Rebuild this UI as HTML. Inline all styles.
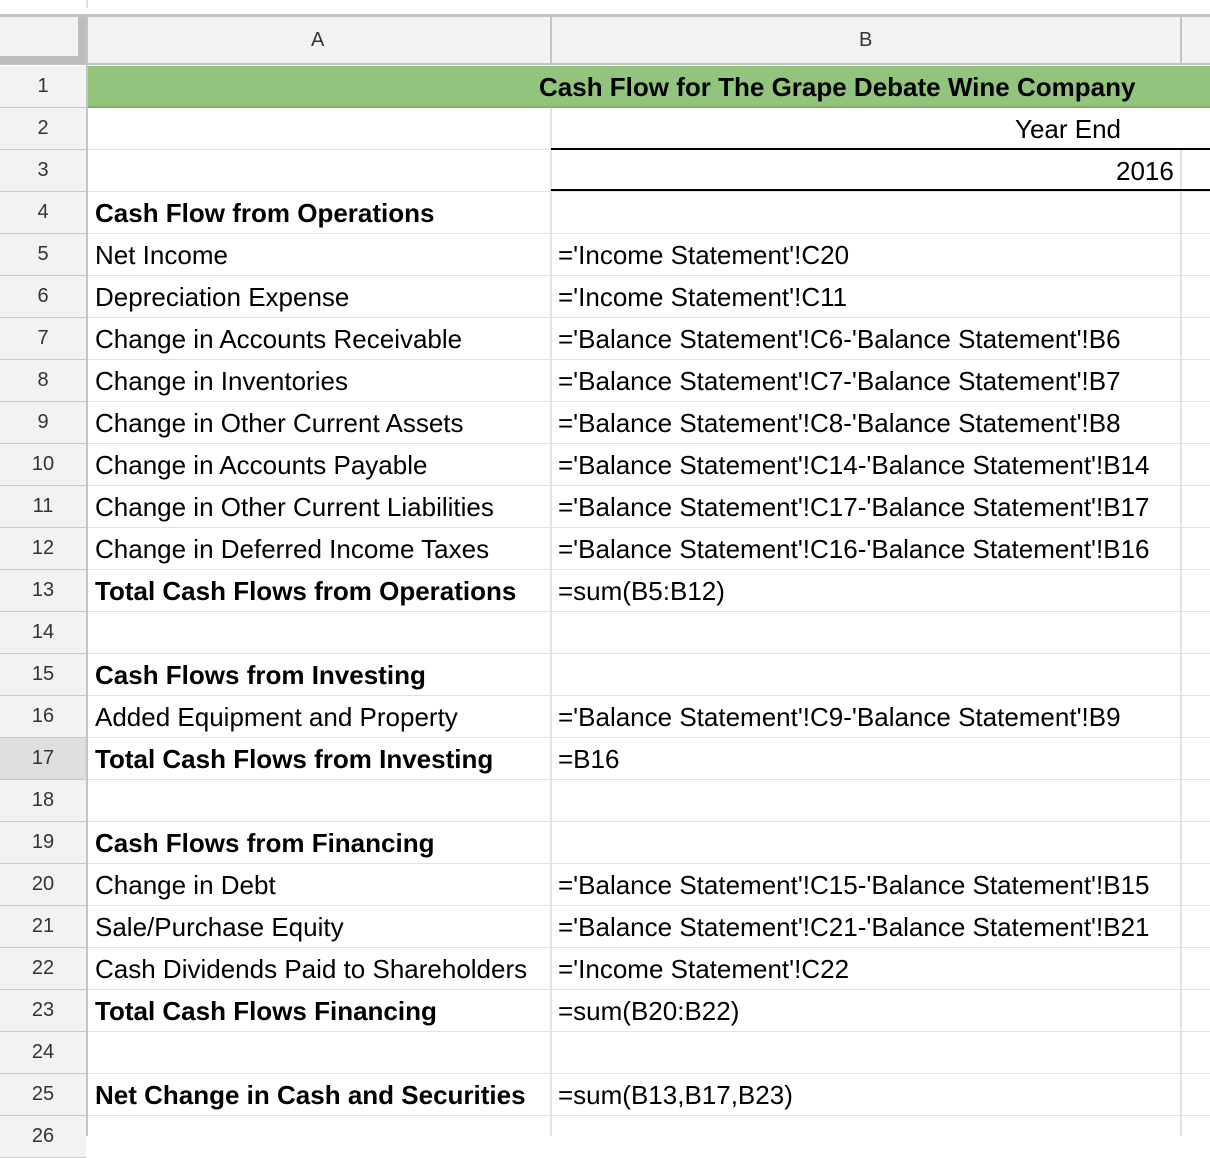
<!DOCTYPE html>
<html><head><meta charset="utf-8"><style>
*{margin:0;padding:0;box-sizing:border-box}
body{width:1210px;height:1136px;overflow:hidden;background:#fff;position:relative;font-family:"Liberation Sans",Arial,sans-serif;color:#000}
.a{position:absolute}
.rh{position:absolute;left:0;width:86px;height:42px;background:#f2f2f2;border-bottom:1px solid #c8c8c8;color:#333;font-size:20px;text-align:center;line-height:41px}
.hl{position:absolute;left:88px;width:1122px;height:1px;background:#e2e2e2}
.t{position:absolute;font-size:26px;line-height:42px;white-space:nowrap}
.l{left:95px}.r{left:558px}
.b{font-weight:bold}
</style></head><body>
<div class="a" style="left:86px;top:0;width:2px;height:8px;background:#e0e0e0"></div>
<div class="a" style="left:0;top:14px;width:1210px;height:3px;background:#c4c4c4"></div>
<div class="a" style="left:0;top:17px;width:1210px;height:48px;background:#f2f2f2;border-bottom:2px solid #c4c4c4"></div>
<div class="a" style="left:78px;top:17px;width:8px;height:47px;background:#bdbdbd"></div>
<div class="a" style="left:0;top:56px;width:86px;height:8px;background:#bdbdbd"></div>
<div class="a" style="left:86px;top:17px;width:2px;height:48px;background:#c4c4c4"></div>
<div class="a" style="left:550px;top:17px;width:2px;height:48px;background:#c4c4c4"></div>
<div class="a" style="left:1180px;top:17px;width:2px;height:48px;background:#c4c4c4"></div>
<div class="a" style="left:311px;top:29px;font-size:20px;color:#333">A</div>
<div class="a" style="left:859px;top:29px;font-size:20px;color:#333">B</div>
<div class="a" style="left:86px;top:65px;width:2px;height:1071px;background:#c4c4c4"></div>
<div class="a" style="left:550px;top:108px;width:2px;height:1028px;background:#e2e2e2"></div>
<div class="a" style="left:1180px;top:150px;width:2px;height:986px;background:#e2e2e2"></div>
<div class="a" style="left:88px;top:66px;width:1122px;height:42px;background:#93c47d;border-bottom:2px solid #7fb46a"></div>

<div class="rh" style="top:66px">1</div>
<div class="rh" style="top:108px">2</div>
<div class="rh" style="top:150px">3</div>
<div class="rh" style="top:192px">4</div>
<div class="rh" style="top:234px">5</div>
<div class="rh" style="top:276px">6</div>
<div class="rh" style="top:318px">7</div>
<div class="rh" style="top:360px">8</div>
<div class="rh" style="top:402px">9</div>
<div class="rh" style="top:444px">10</div>
<div class="rh" style="top:486px">11</div>
<div class="rh" style="top:528px">12</div>
<div class="rh" style="top:570px">13</div>
<div class="rh" style="top:612px">14</div>
<div class="rh" style="top:654px">15</div>
<div class="rh" style="top:696px">16</div>
<div class="rh" style="top:738px;background:#dedede">17</div>
<div class="rh" style="top:780px">18</div>
<div class="rh" style="top:822px">19</div>
<div class="rh" style="top:864px">20</div>
<div class="rh" style="top:906px">21</div>
<div class="rh" style="top:948px">22</div>
<div class="rh" style="top:990px">23</div>
<div class="rh" style="top:1032px">24</div>
<div class="rh" style="top:1074px">25</div>
<div class="rh" style="top:1116px">26</div>

<div class="hl" style="top:149px"></div>
<div class="hl" style="top:191px"></div>
<div class="hl" style="top:233px"></div>
<div class="hl" style="top:275px"></div>
<div class="hl" style="top:317px"></div>
<div class="hl" style="top:359px"></div>
<div class="hl" style="top:401px"></div>
<div class="hl" style="top:443px"></div>
<div class="hl" style="top:485px"></div>
<div class="hl" style="top:527px"></div>
<div class="hl" style="top:569px"></div>
<div class="hl" style="top:611px"></div>
<div class="hl" style="top:653px"></div>
<div class="hl" style="top:695px"></div>
<div class="hl" style="top:737px"></div>
<div class="hl" style="top:779px"></div>
<div class="hl" style="top:821px"></div>
<div class="hl" style="top:863px"></div>
<div class="hl" style="top:905px"></div>
<div class="hl" style="top:947px"></div>
<div class="hl" style="top:989px"></div>
<div class="hl" style="top:1031px"></div>
<div class="hl" style="top:1073px"></div>
<div class="hl" style="top:1115px"></div>

<div class="a" style="left:551px;top:148px;width:659px;height:2px;background:#000"></div>
<div class="a" style="left:551px;top:189px;width:659px;height:2px;background:#000"></div>
<div class="t b" style="left:539px;top:66px">Cash Flow for The Grape Debate Wine Company</div>
<div class="t" style="left:1015px;top:108px">Year End</div>
<div class="t" style="left:1116px;top:150px">2016</div>

<div class="t l b" style="top:192px">Cash Flow from Operations</div>
<div class="t l" style="top:234px">Net Income</div>
<div class="t l" style="top:276px">Depreciation Expense</div>
<div class="t l" style="top:318px">Change in Accounts Receivable</div>
<div class="t l" style="top:360px">Change in Inventories</div>
<div class="t l" style="top:402px">Change in Other Current Assets</div>
<div class="t l" style="top:444px">Change in Accounts Payable</div>
<div class="t l" style="top:486px">Change in Other Current Liabilities</div>
<div class="t l" style="top:528px">Change in Deferred Income Taxes</div>
<div class="t l b" style="top:570px">Total Cash Flows from Operations</div>
<div class="t l b" style="top:654px">Cash Flows from Investing</div>
<div class="t l" style="top:696px">Added Equipment and Property</div>
<div class="t l b" style="top:738px">Total Cash Flows from Investing</div>
<div class="t l b" style="top:822px">Cash Flows from Financing</div>
<div class="t l" style="top:864px">Change in Debt</div>
<div class="t l" style="top:906px">Sale/Purchase Equity</div>
<div class="t l" style="top:948px">Cash Dividends Paid to Shareholders</div>
<div class="t l b" style="top:990px">Total Cash Flows Financing</div>
<div class="t l b" style="top:1074px">Net Change in Cash and Securities</div>

<div class="t r" style="top:234px">='Income Statement'!C20</div>
<div class="t r" style="top:276px">='Income Statement'!C11</div>
<div class="t r" style="top:318px">='Balance Statement'!C6-'Balance Statement'!B6</div>
<div class="t r" style="top:360px">='Balance Statement'!C7-'Balance Statement'!B7</div>
<div class="t r" style="top:402px">='Balance Statement'!C8-'Balance Statement'!B8</div>
<div class="t r" style="top:444px">='Balance Statement'!C14-'Balance Statement'!B14</div>
<div class="t r" style="top:486px">='Balance Statement'!C17-'Balance Statement'!B17</div>
<div class="t r" style="top:528px">='Balance Statement'!C16-'Balance Statement'!B16</div>
<div class="t r" style="top:570px">=sum(B5:B12)</div>
<div class="t r" style="top:696px">='Balance Statement'!C9-'Balance Statement'!B9</div>
<div class="t r" style="top:738px">=B16</div>
<div class="t r" style="top:864px">='Balance Statement'!C15-'Balance Statement'!B15</div>
<div class="t r" style="top:906px">='Balance Statement'!C21-'Balance Statement'!B21</div>
<div class="t r" style="top:948px">='Income Statement'!C22</div>
<div class="t r" style="top:990px">=sum(B20:B22)</div>
<div class="t r" style="top:1074px">=sum(B13,B17,B23)</div>
</body></html>
